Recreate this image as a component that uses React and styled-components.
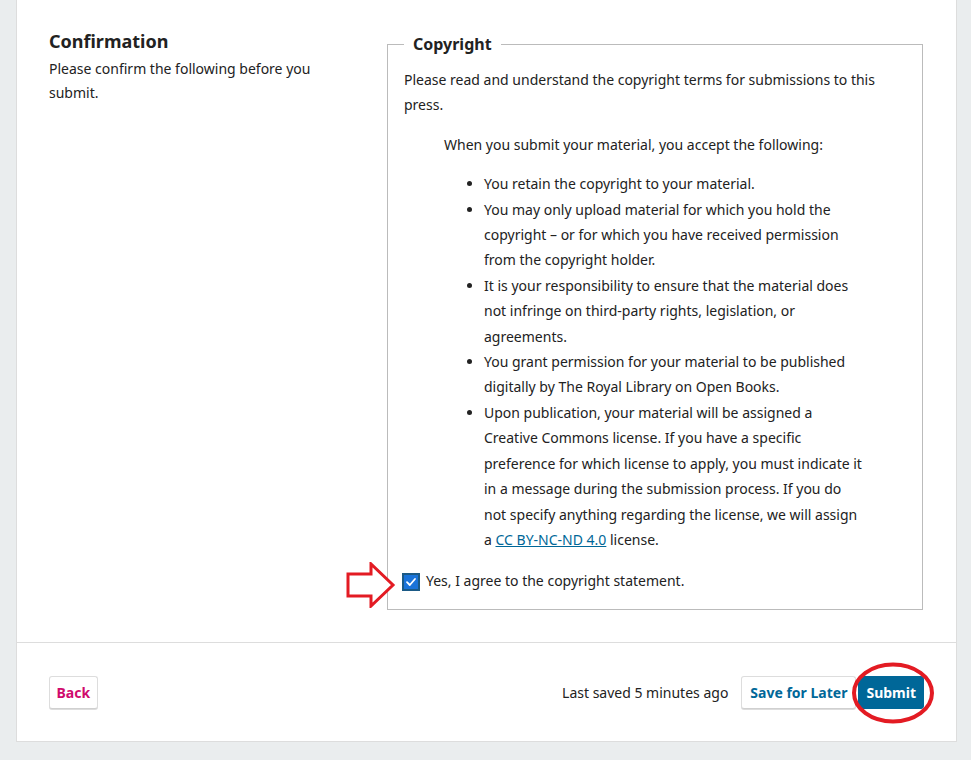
import React from 'react'
import styled, { createGlobalStyle } from 'styled-components'

const GlobalStyle = createGlobalStyle`
  html, body {
    margin: 0;
    padding: 0;
    background: #eaedee;
  }
  body {
    font-family: "Noto Sans", "Open Sans", sans-serif;
    font-size: 14px;
    color: #222;
  }
`

const Page = styled.div`
  padding: 0 14px 19px 16px;
`

const Card = styled.div`
  background: #fff;
  border: 1px solid #dddddd;
  border-top: none;
`

const Section = styled.div`
  display: flex;
  align-items: flex-start;
  padding: 32px 33px 32px 32px;
`

const Intro = styled.div`
  flex: 1;
  padding-right: 40px;
`

const Heading = styled.h2`
  margin: 0;
  font-size: 18px;
  line-height: 18px;
  font-weight: 700;
`

const IntroText = styled.p`
  margin: 7px 0 0;
  line-height: 24px;
  max-width: 280px;
`

const Fieldset = styled.fieldset`
  width: 536px;
  box-sizing: border-box;
  margin: 0;
  border: 1px solid #bbbbbb;
  padding: 0 16px 15px;
  line-height: 25.4px;
`

const Legend = styled.legend`
  font-size: 16px;
  font-weight: 700;
  line-height: 24px;
  padding: 0 9px;
`

const Para = styled.p`
  margin: ${p => (p.$first ? '11px 0 14px' : '14px 0')};
`

const Quote = styled.blockquote`
  margin: 14px 40px;
`

const List = styled.ul`
  margin: 14px 0;
  padding-left: 40px;
`

const Link = styled.a`
  color: #006798;
  text-decoration: underline;
`

const AgreeRow = styled.label`
  position: relative;
  display: flex;
  align-items: center;
  gap: 6px;
  margin-top: 16px;
`

const Check = styled.span`
  width: 14px;
  height: 14px;
  flex: none;
  border: 2px solid #1b5a86;
  background: #1a73d9;
  display: flex;
  align-items: center;
  justify-content: center;
  margin: 1px 0 0 -2px;
`

const Arrow = styled.svg`
  position: absolute;
  left: -58px;
  top: -6px;
`

const Footer = styled.div`
  display: flex;
  align-items: center;
  border-top: 1px solid #dddddd;
  padding: 33px 32px 32px;
`

const Spacer = styled.div`
  flex: 1;
`

const Saved = styled.span`
  margin-right: 13px;
`

const Button = styled.button`
  position: relative;
  height: 33px;
  padding: 0 ${p => p.$pad || 8}px;
  font-family: inherit;
  font-size: 14px;
  font-weight: 700;
  border-radius: 3px;
  cursor: pointer;
  border: 1px solid ${p => (p.$primary ? '#006798' : '#dddddd')};
  border-bottom-color: ${p => (p.$primary ? '#006798' : '#d0d0d0')};
  box-shadow: 0 1px 0 ${p => (p.$primary ? 'transparent' : '#dddddd')};
  background: ${p => (p.$primary ? '#006798' : '#fff')};
  color: ${p => p.$color || '#006798'};
  margin-left: ${p => (p.$primary ? '2px' : '0')};
`

const Ring = styled.svg`
  position: absolute;
  left: -8px;
  top: -15px;
  pointer-events: none;
`

const items = [
  'You retain the copyright to your material.',
  'You may only upload material for which you hold the copyright – or for which you have received permission from the copyright holder.',
  'It is your responsibility to ensure that the material does not infringe on third-party rights, legislation, or agreements.',
  'You grant permission for your material to be published digitally by The Royal Library on Open Books.',
]

export default function App() {
  return (
    <Page>
      <GlobalStyle />
      <Card>
        <Section>
          <Intro>
            <Heading>Confirmation</Heading>
            <IntroText>Please confirm the following before you submit.</IntroText>
          </Intro>
          <Fieldset>
            <Legend>Copyright</Legend>
            <Para $first>
              Please read and understand the copyright terms for submissions to this press.
            </Para>
            <Quote>
              <Para>When you submit your material, you accept the following:</Para>
              <List>
                {items.map(t => (
                  <li key={t}>{t}</li>
                ))}
                <li>
                  Upon publication, your material will be assigned a Creative Commons license. If
                  you have a specific preference for which license to apply, you must indicate it
                  in a message during the submission process. If you do not specify anything
                  regarding the license, we will assign a <Link href="#">CC BY-NC-ND 4.0</Link>{' '}
                  license.
                </li>
              </List>
            </Quote>
            <AgreeRow>
              <Arrow width="50" height="46" viewBox="0 0 50 46">
                <path
                  d="M2 12 H25 V2 L47 23 L25 44 V34 H2 Z"
                  fill="#fff"
                  stroke="#e31b23"
                  strokeWidth="3"
                  strokeLinejoin="miter"
                />
              </Arrow>
              <Check>
                <svg width="12" height="12" viewBox="0 0 12 12">
                  <path
                    d="M2 6.2 L4.8 9 L10 3"
                    fill="none"
                    stroke="#fff"
                    strokeWidth="1.8"
                    strokeLinecap="round"
                    strokeLinejoin="round"
                  />
                </svg>
              </Check>
              Yes, I agree to the copyright statement.
            </AgreeRow>
          </Fieldset>
        </Section>
        <Footer>
          <Button $color="#d00a6c" $pad={6.5}>Back</Button>
          <Spacer />
          <Saved>Last saved 5 minutes ago</Saved>
          <Button $pad={8}>Save for Later</Button>
          <Button $primary $color="#fff" $pad={7}>
            Submit
            <Ring width="84" height="62" viewBox="0 0 84 62">
              <ellipse cx="42" cy="31" rx="39" ry="28.5" fill="none" stroke="#e31b23" strokeWidth="4" />
            </Ring>
          </Button>
        </Footer>
      </Card>
    </Page>
  )
}
